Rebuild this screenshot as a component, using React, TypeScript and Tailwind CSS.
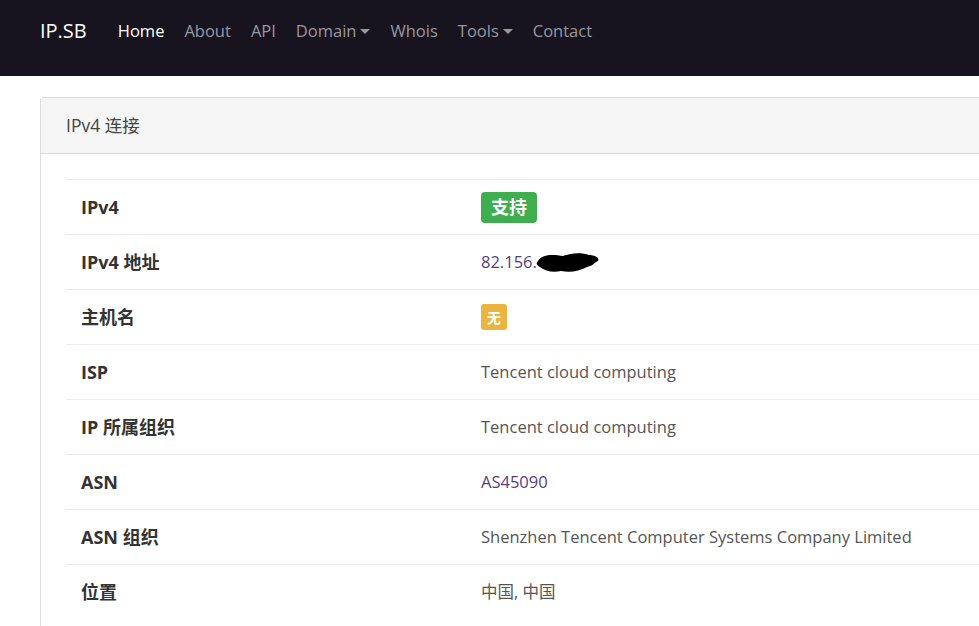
import React from "react";

const font = { fontFamily: '"Open Sans", "Noto Sans CJK SC", sans-serif' };

function Caret() {
  return (
    <svg width="10" height="6" viewBox="0 0 10 6" className="ml-[4px] mt-[1px]">
      <path d="M0 0 L10 0 L5 5 Z" fill="currentColor" />
    </svg>
  );
}

function Scribble() {
  return (
    <svg width="66" height="26" viewBox="0 0 66 26" className="ml-[-2px]">
      <path
        d="M3 12 C8 4 20 6 28 7 C36 4 46 3 54 6 C60 6 65 9 63 12 C58 14 60 16 52 18 C44 22 36 24 26 22 C18 24 10 22 5 18 C1 16 1 14 3 12 Z"
        fill="#000"
      />
    </svg>
  );
}

type Row = { label: string; value: React.ReactNode };

const rows: Row[] = [
  {
    label: "IPv4",
    value: (
      <span className="inline-flex items-center justify-center h-[31px] px-[10px] rounded-[4px] bg-[#3eae4f] text-white font-bold text-[18px]">
        支持
      </span>
    ),
  },
  {
    label: "IPv4 地址",
    value: (
      <span className="inline-flex items-center text-[#563d7c]">
        82.156.
        <Scribble />
      </span>
    ),
  },
  {
    label: "主机名",
    value: (
      <span className="inline-flex items-center justify-center h-[26px] px-[6px] rounded-[3px] bg-[#ebb43f] text-white font-bold text-[14px]">
        无
      </span>
    ),
  },
  { label: "ISP", value: "Tencent cloud computing" },
  { label: "IP 所属组织", value: "Tencent cloud computing" },
  { label: "ASN", value: <span className="text-[#563d7c]">AS45090</span> },
  { label: "ASN 组织", value: "Shenzhen Tencent Computer Systems Company Limited" },
  { label: "位置", value: "中国, 中国" },
];

export default function App() {
  return (
    <div className="w-[979px] h-[626px] overflow-hidden bg-white" style={font}>
      <nav className="h-[76px] bg-[#18141f] flex items-start pt-[17px] pl-[40px]">
        <span className="text-white text-[20px] leading-[28px] mr-[31px]">IP.SB</span>
        <div className="flex items-center gap-[20px] text-[16.5px] leading-[28px] text-[#9a979f]">
          <span className="text-white">Home</span>
          <span>About</span>
          <span>API</span>
          <span className="flex items-center">
            Domain
            <Caret />
          </span>
          <span>Whois</span>
          <span className="flex items-center">
            Tools
            <Caret />
          </span>
          <span>Contact</span>
        </div>
      </nav>
      <div className="pt-[21px] pl-[40px]">
        <div className="w-[1000px] border border-[#dcdcdc] rounded-[3px]">
          <div className="h-[56px] bg-[#f5f5f5] border-b border-[#dcdcdc] flex items-center pl-[25px] text-[17.5px] text-[#444]">
            IPv4 连接
          </div>
          <div className="pt-[25px] pl-[25px] pb-[40px]">
            <div className="flex flex-col">
              {rows.map((r) => (
                <div
                  key={r.label}
                  className="h-[55px] border-t border-[#ececec] flex items-center"
                >
                  <div className="w-[415px] pl-[15px] font-bold text-[18px] text-[#333]">
                    {r.label}
                  </div>
                  <div className="text-[16.5px] text-[#555]">{r.value}</div>
                </div>
              ))}
            </div>
          </div>
        </div>
      </div>
    </div>
  );
}
